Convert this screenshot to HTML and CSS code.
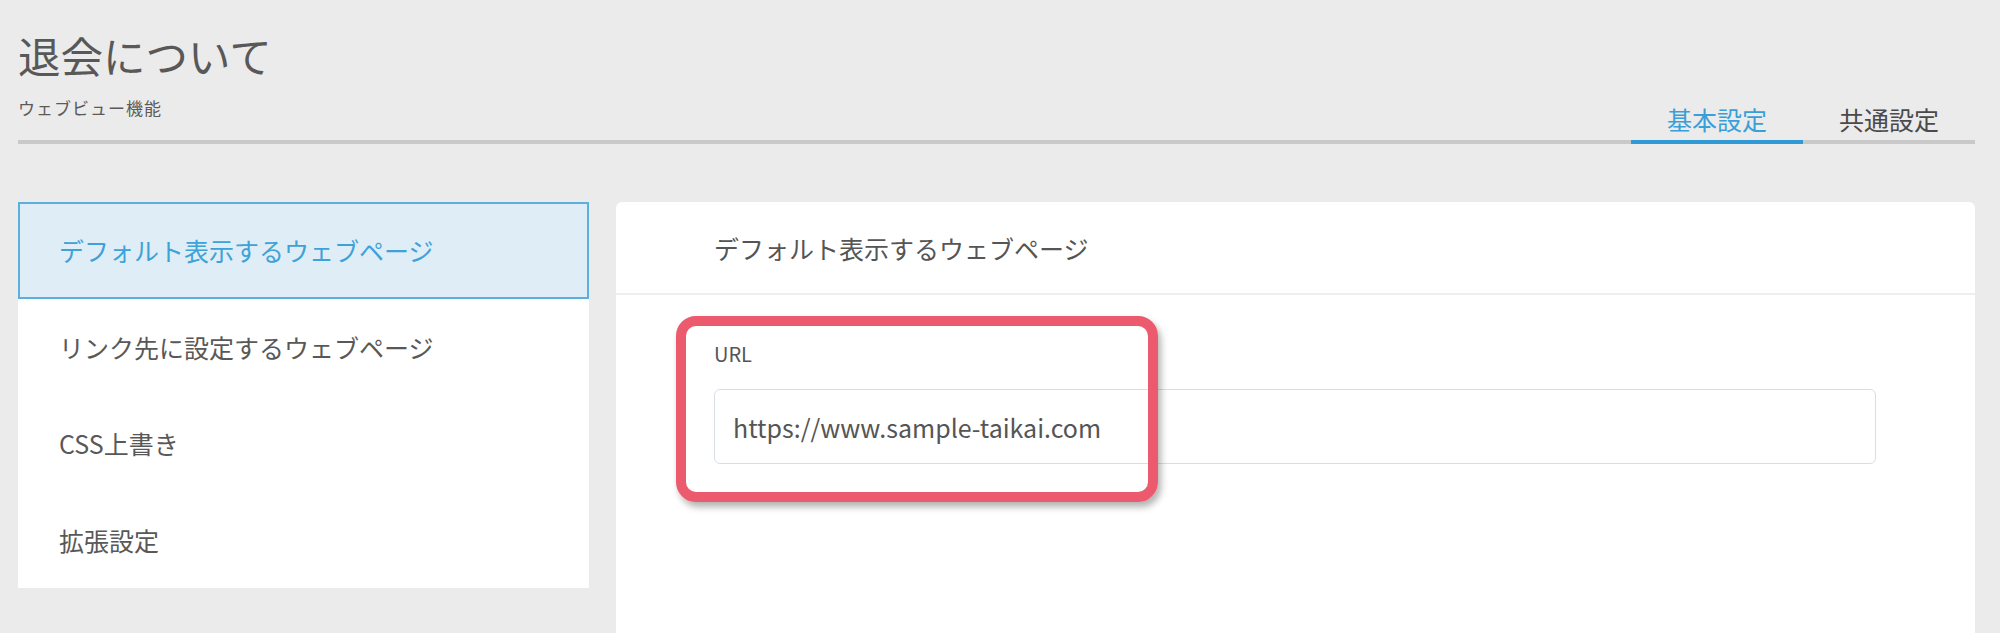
FILE: index.html
```html
<!DOCTYPE html>
<html lang="ja">
<head>
<meta charset="utf-8">
<title>退会について</title>
<link rel="stylesheet" href="styles.css">
</head>
<body>
<div class="page">
  <header class="head">
    <h1 class="title">退会について</h1>
    <div class="head-row">
      <p class="subtitle">ウェブビュー機能</p>
      <nav class="tabs">
        <a class="tab active">基本設定</a>
        <a class="tab">共通設定</a>
      </nav>
    </div>
  </header>
  <div class="main">
    <aside class="side">
      <div class="side-item active">デフォルト表示するウェブページ</div>
      <div class="side-item">リンク先に設定するウェブページ</div>
      <div class="side-item">CSS上書き</div>
      <div class="side-item">拡張設定</div>
    </aside>
    <section class="card">
      <div class="card-head">デフォルト表示するウェブページ</div>
      <div class="card-body">
        <div class="field">
          <label class="label">URL</label>
          <div class="input">https://www.sample-taikai.com</div>
        </div>
        <div class="highlight"></div>
      </div>
    </section>
  </div>
</div>
</body>
</html>
```

FILE: styles.css
```css
* { box-sizing: border-box; }
html, body { margin: 0; padding: 0; }
body {
  background: #ebebeb;
  font-family: "Noto Sans CJK JP", "Noto Sans", sans-serif;
  color: #555555;
  width: 2000px;
  height: 633px;
  overflow: hidden;
}
.page {
  padding: 34px 25px 0 18px;
}
.title {
  margin: 0;
  font-size: 42.5px;
  line-height: 42px;
  font-weight: 400;
  color: #585858;
}
.head-row {
  display: flex;
  justify-content: space-between;
  align-items: flex-start;
  border-bottom: 4px solid #c9c9c9;
}
.subtitle {
  margin: 23px 0 0;
  font-size: 17px;
  line-height: 17px;
  letter-spacing: 1px;
  color: #5a5a5a;
}
.tabs {
  display: flex;
  margin-top: 31px;
}
.tab {
  display: block;
  padding: 0 36px 8px;
  font-size: 25px;
  line-height: 25px;
  color: #4a4a4a;
  border-bottom: 4px solid transparent;
  margin-bottom: -4px;
}
.tab.active {
  color: #3a9fd8;
  border-bottom-color: #2f9ad5;
}
.main {
  display: flex;
  margin-top: 58px;
  align-items: flex-start;
}
.side {
  width: 571px;
  background: #ffffff;
}
.side-item {
  height: 96.5px;
  display: flex;
  align-items: center;
  padding-left: 39px;
  font-size: 25px;
  color: #585858;
  border: 2px solid transparent;
}
.side-item.active {
  background: #deedf6;
  border-color: #5cb0e0;
  color: #3ea2d9;
}
.card {
  flex: 1;
  margin-left: 27px;
  background: #ffffff;
  border-radius: 6px 6px 0 0;
  min-height: 460px;
}
.card-head {
  height: 93px;
  display: flex;
  align-items: center;
  padding-left: 98px;
  font-size: 25px;
  color: #555555;
  border-bottom: 2px solid #eceef0;
}
.card-body {
  position: relative;
  padding: 49px 99px 0 98px;
}
.label {
  display: block;
  font-size: 20px;
  line-height: 20px;
  color: #555555;
  margin-bottom: 25px;
}
.input {
  height: 75px;
  border: 1px solid #d8dee6;
  border-radius: 6px;
  display: flex;
  align-items: center;
  padding-left: 18px;
  font-size: 25px;
  color: #555555;
}
.highlight {
  position: absolute;
  left: 60px;
  top: 21px;
  width: 482px;
  height: 186px;
  border: 10px solid #ec5a6e;
  border-radius: 20px;
  box-shadow: 3px 5px 7px rgba(0, 0, 0, 0.3);
}
```
